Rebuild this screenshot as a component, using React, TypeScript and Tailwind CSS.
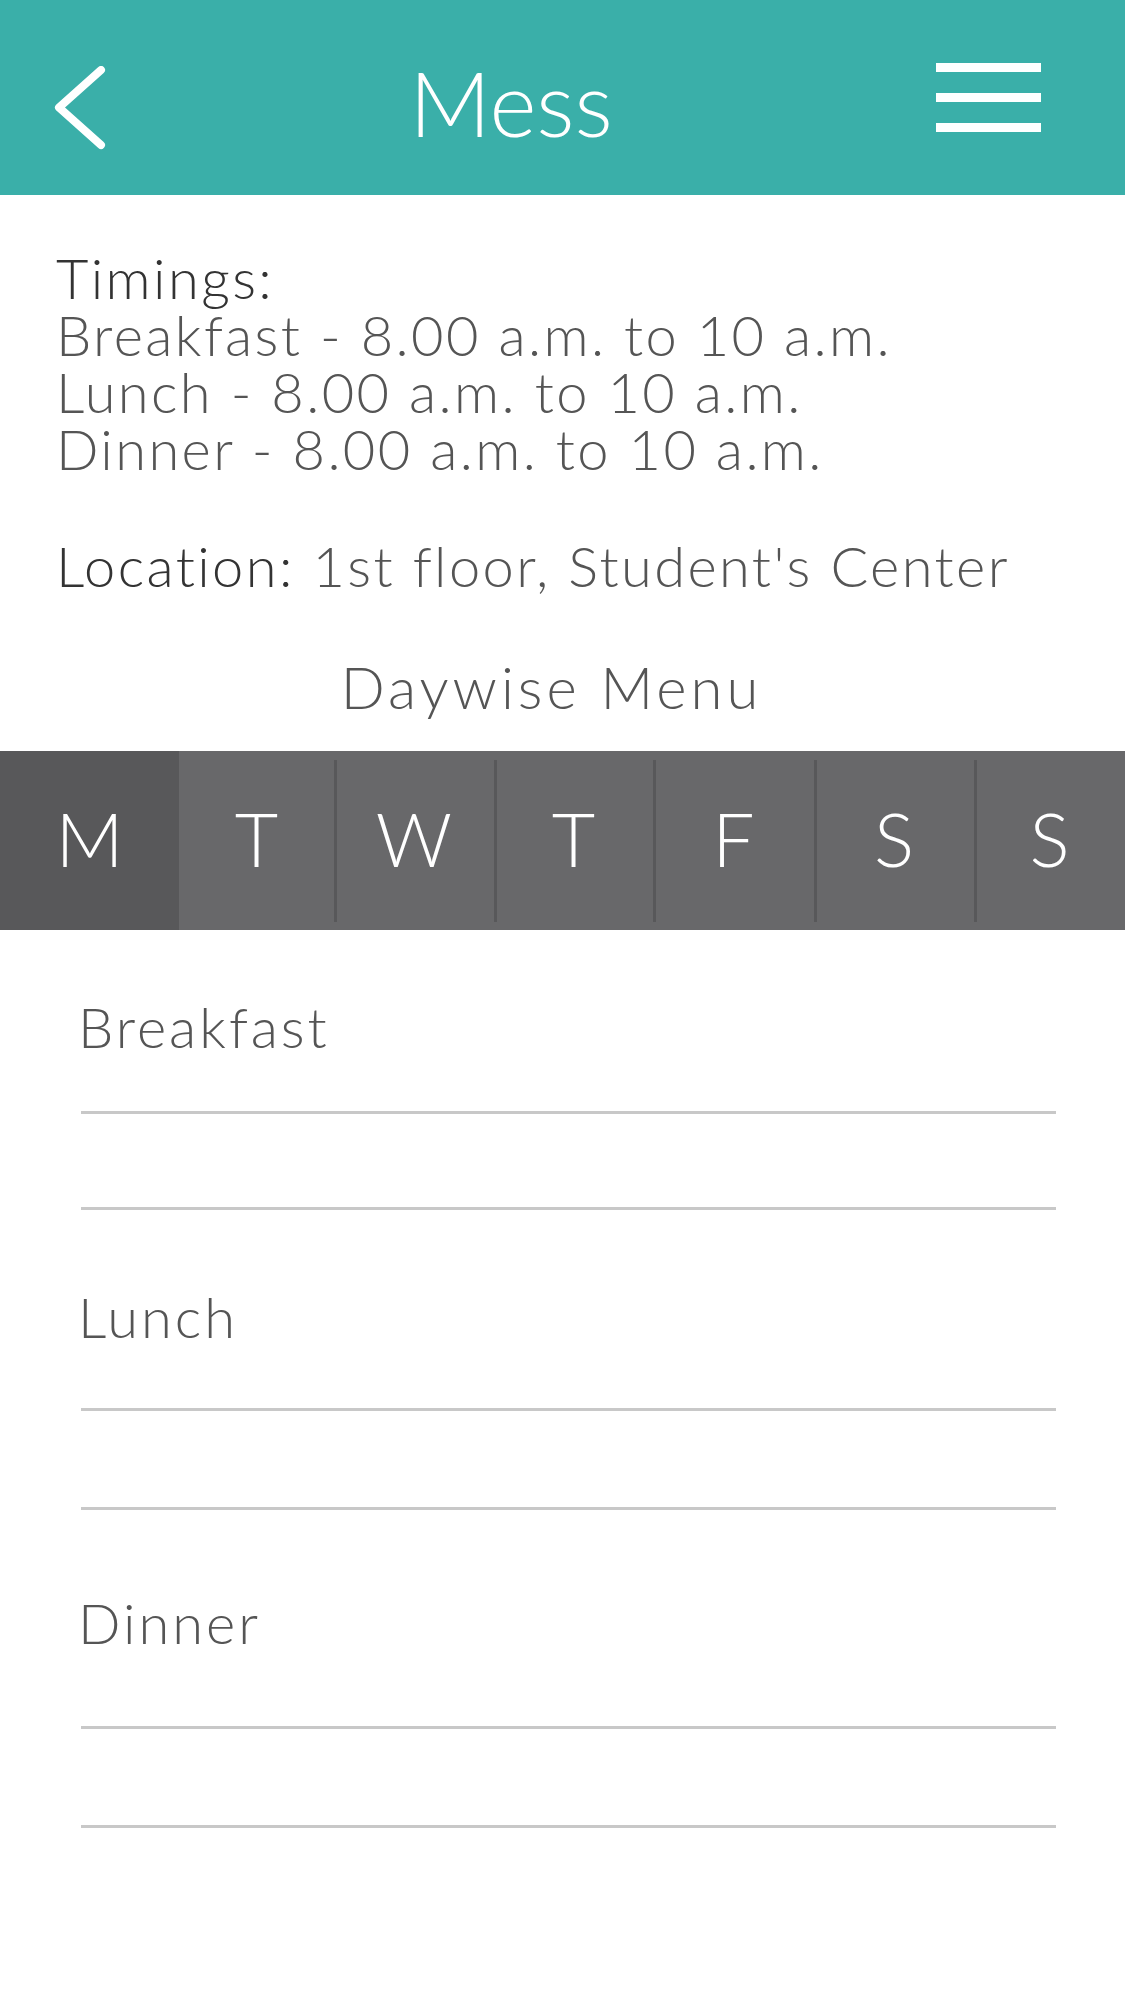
import React from "react";

const days = ["M", "T", "W", "T", "F", "S", "S"];

interface MealBlockProps {
  title: string;
  className: string;
  firstGap: string;
  secondGap: string;
}

const MealBlock: React.FC<MealBlockProps> = ({ title, className, firstGap, secondGap }) => {
  return (
    <section className={className}>
      <h3 className="pl-[78px] text-[56px] leading-[57px] font-light tracking-[3px] text-[#555555]">{title}</h3>
      <div className={`${firstGap} ml-[81px] mr-[69px] h-[3px] bg-[#c8c8c8]`} />
      <div className={`${secondGap} ml-[81px] mr-[69px] h-[3px] bg-[#c8c8c8]`} />
    </section>
  );
};

export default function App() {
  return (
    <div className="min-h-screen w-[1125px] bg-white font-['Lato','Liberation_Sans',sans-serif]">
      <header className="flex h-[195px] items-center bg-[#3aafa9]">
        <svg className="ml-[54px] mt-[20px] shrink-0" width="52" height="84" viewBox="0 0 52 84" fill="none">
          <polyline
            points="47,4 5,41.5 47,79"
            stroke="white"
            strokeWidth="8"
            strokeLinecap="round"
            strokeLinejoin="round"
          />
        </svg>
        <h1 className="flex-1 pr-[20px] pt-[8px] text-center text-[90px] leading-none font-light text-white">Mess</h1>
        <div className="mr-[84px] flex flex-col gap-[21px]">
          <span className="block h-[9px] w-[105px] bg-white" />
          <span className="block h-[9px] w-[105px] bg-white" />
          <span className="block h-[9px] w-[105px] bg-white" />
        </div>
      </header>

      <main>
        <div className="px-[56px] pt-[54px] text-[56px] leading-[57px] font-light tracking-[2.4px]">
          <p className="text-[#333333]">Timings:</p>
          <p className="text-[#555555]">Breakfast - 8.00 a.m. to 10 a.m.</p>
          <p className="text-[#555555]">Lunch - 8.00 a.m. to 10 a.m.</p>
          <p className="text-[#555555]">Dinner - 8.00 a.m. to 10 a.m.</p>
          <p className="mt-[60px]">
            <span className="text-[#333333]">Location: </span>
            <span className="text-[#555555]">1st floor, Student's Center</span>
          </p>
        </div>

        <h2 className="mt-[64px] pr-[22px] text-center text-[58px] leading-[57px] font-light tracking-[4px] text-[#555555]">
          Daywise Menu
        </h2>

        <nav className="mt-[36px] grid h-[179px] grid-cols-[179px_155px_160px_159px_161px_160px_1fr] bg-[#68686a]">
          {days.map((d, i) => (
            <div key={i} className={i === 0 ? "bg-[#58585a] pt-[9px] pb-[8px]" : "pt-[9px] pb-[8px]"}>
              <div
                className={
                  i > 1
                    ? "flex h-full items-center justify-center border-l-[3px] border-[#58585a] pr-[3px] pb-[6px] text-[75px] leading-none font-light text-white"
                    : "flex h-full items-center justify-center pb-[6px] text-[75px] leading-none font-light text-white"
                }
              >
                {d}
              </div>
            </div>
          ))}
        </nav>

        <MealBlock title="Breakfast" className="pt-[68px]" firstGap="mt-[56px]" secondGap="mt-[93px]" />
        <MealBlock title="Lunch" className="pt-[78px]" firstGap="mt-[63px]" secondGap="mt-[96px]" />
        <MealBlock title="Dinner" className="pt-[84px]" firstGap="mt-[75px]" secondGap="mt-[96px]" />
      </main>
    </div>
  );
}
